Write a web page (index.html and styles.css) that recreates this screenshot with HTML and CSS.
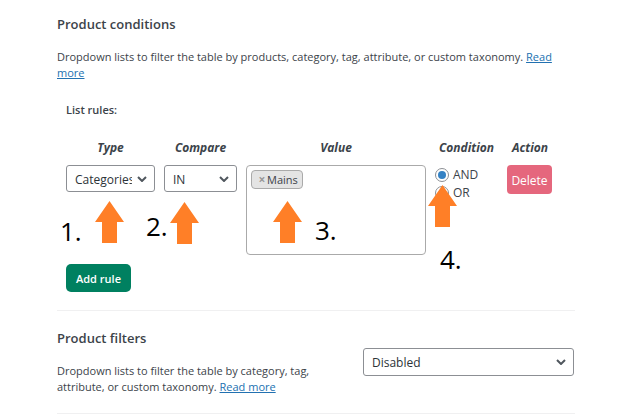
FILE: index.html
```html
<!DOCTYPE html>
<html lang="en">

<head>
    <meta charset="utf-8">
    <title>Product conditions</title>
    <link rel="stylesheet" href="styles.css">
</head>

<body>
    <div class="container">
        <section class="option">
            <h3>Product conditions</h3>
            <p>Dropdown lists to filter the table by products, category, tag, attribute, or custom taxonomy. <a href="#">Read more</a></p>

            <div class="rules">
                <h4>List rules:</h4>
                <table class="rules-table">
                    <colgroup>
                        <col class="col-type">
                        <col class="col-compare">
                        <col class="col-value">
                        <col class="col-condition">
                        <col class="col-action">
                    </colgroup>
                    <tr>
                        <th id="type">Type</th>
                        <th id="compare">Compare</th>
                        <th id="value">Value</th>
                        <th>Condition</th>
                        <th>Action</th>
                    </tr>
                    <tr>
                        <td>
                            <div class="select">
                                <select aria-labelledby="type">
                                    <option>Categories</option>
                                </select>
                                <svg viewBox="0 0 10 6"><path d="M1 1l4 4 4-4"/></svg>
                            </div>
                        </td>
                        <td>
                            <div class="select">
                                <select aria-labelledby="compare">
                                    <option>IN</option>
                                </select>
                                <svg viewBox="0 0 10 6"><path d="M1 1l4 4 4-4"/></svg>
                            </div>
                        </td>
                        <td>
                            <div class="tags" role="group" aria-labelledby="value">
                                <span class="tag"><button type="button" class="tag-remove" aria-label="Remove">×</button>Mains</span>
                            </div>
                        </td>
                        <td>
                            <label class="radio"><input type="radio" name="condition" checked>AND</label>
                            <label class="radio"><input type="radio" name="condition">OR</label>
                        </td>
                        <td><button type="button" class="btn btn-delete">Delete</button></td>
                    </tr>
                </table>
                <button type="button" class="btn btn-add">Add rule</button>

                <!-- Numbered arrows over the rule fields -->
                <svg class="arrow arrow-1" viewBox="0 0 29 42"><path d="M14.5 0L29 21H22V42H7V21H0z"/></svg>
                <svg class="arrow arrow-2" viewBox="0 0 29 42"><path d="M14.5 0L29 21H22V42H7V21H0z"/></svg>
                <svg class="arrow arrow-3" viewBox="0 0 29 42"><path d="M14.5 0L29 21H22V42H7V21H0z"/></svg>
                <svg class="arrow arrow-4" viewBox="0 0 29 42"><path d="M14.5 0L29 21H22V42H7V21H0z"/></svg>
                <span class="step step-1">1.</span>
                <span class="step step-2">2.</span>
                <span class="step step-3">3.</span>
                <span class="step step-4">4.</span>
            </div>
        </section>

        <section class="option option-row">
            <div class="option-text">
                <h3><label for="filters">Product filters</label></h3>
                <p>Dropdown lists to filter the table by category, tag, attribute, or custom taxonomy. <a href="#">Read more</a></p>
            </div>
            <div class="select select-wide">
                <select id="filters">
                    <option>Disabled</option>
                </select>
                <svg viewBox="0 0 10 6"><path d="M1 1l4 4 4-4"/></svg>
            </div>
        </section>
    </div>
</body>

</html>
```
FILE: styles.css
```css
* {
    box-sizing: border-box;
}

body {
    margin: 0;
    background-color: #ffffff;
    color: #3c434a;
    font-family: "Open Sans", "Noto Sans", sans-serif;
    font-size: 12px;
    line-height: 16px;
}

.container {
    margin: 0 53px 0 57px;
}

.option {
    padding: 14px 0 18px;
    border-bottom: 1px solid #f0f0f1;
}

h3 {
    margin: 0;
    font-size: 13px;
    font-weight: 600;
    line-height: 20px;
}

p {
    margin: 15px 0 0;
    font-size: 11px;
}

a {
    color: #2271b1;
}

h4 {
    margin: 0 0 22px;
    font-size: 11px;
    font-weight: 600;
}

.rules {
    position: relative;
    margin: 21px 9px 0;
}

/* Rules table */
.rules-table {
    width: 487px;
    table-layout: fixed;
    border-collapse: collapse;
    margin-bottom: 9px;
}

.col-type {
    width: 98px;
}

.col-compare {
    width: 82px;
}

.col-value {
    width: 189px;
}

.col-condition {
    width: 72px;
}

.rules-table th {
    padding: 0 9px 9px 0;
    font-weight: 700;
    font-style: italic;
    white-space: nowrap;
}

.rules-table td {
    padding: 0 9px 0 0;
    vertical-align: top;
}

.rules-table th:last-child,
.rules-table td:last-child {
    padding-right: 0;
}

/* Fields */
.select {
    position: relative;
}

.select select {
    display: block;
    appearance: none;
    width: 100%;
    height: 27px;
    padding: 1px 22px 0 8px;
    border: 1px solid #8c8f94;
    border-radius: 3px;
    background-color: #ffffff;
    color: #2c3338;
    font-family: inherit;
    font-size: 12px;
}

.select svg {
    position: absolute;
    top: 50%;
    right: 8px;
    width: 10px;
    height: 6px;
    margin-top: -3px;
    fill: none;
    stroke: #50575e;
    stroke-width: 2;
    pointer-events: none;
}

.tags {
    height: 90px;
    padding: 4px;
    border: 1px solid #aaaaaa;
    border-radius: 4px;
}

.tag {
    display: inline-flex;
    align-items: center;
    height: 19px;
    padding: 0 4px 0 5px;
    border: 1px solid #aaaaaa;
    border-radius: 4px;
    background-color: #e4e4e4;
    font-size: 11px;
}

.tag-remove {
    width: 10px;
    padding: 0;
    border: none;
    background: none;
    color: #999999;
    font-family: inherit;
    font-size: 12px;
    font-weight: 700;
    line-height: 16px;
}

.radio {
    display: flex;
    align-items: center;
    gap: 4px;
    height: 18px;
    margin-top: 1px;
}

.radio + .radio {
    margin-top: 0;
}

.radio input {
    flex: none;
    appearance: none;
    width: 14px;
    height: 14px;
    margin: 0;
    padding: 2px;
    border: 1px solid #8c8f94;
    border-radius: 50%;
    background-color: #ffffff;
    background-clip: content-box;
}

.radio input:checked {
    background-color: #3582c4;
}

.btn {
    display: block;
    border: none;
    color: #ffffff;
    font-family: inherit;
    font-size: 12px;
    cursor: pointer;
}

.btn-delete {
    width: 45px;
    height: 29px;
    padding: 1px 0 0;
    border-radius: 4px;
    background-color: #e5677d;
}

.btn-add {
    height: 28px;
    padding: 1px 10px 0;
    border-radius: 5px;
    background-color: #008060;
    font-size: 11px;
    font-weight: 600;
}

/* Arrows and numbers */
.arrow {
    position: absolute;
    width: 29px;
    height: 42px;
    fill: #ff7f27;
}

.arrow-1 {
    top: 99px;
    left: 29px;
}

.arrow-2 {
    top: 100px;
    left: 104px;
}

.arrow-3 {
    top: 99px;
    left: 207px;
}

.arrow-4 {
    top: 83px;
    left: 362px;
}

.step {
    position: absolute;
    color: #000000;
    font-size: 26px;
    line-height: 32px;
}

.step-1 {
    top: 113px;
    left: -6px;
}

.step-2 {
    top: 108px;
    left: 80px;
}

.step-3 {
    top: 112px;
    left: 249px;
}

.step-4 {
    top: 141px;
    left: 374px;
}

/* Product filters */
.option-row {
    display: flex;
    justify-content: space-between;
    align-items: center;
    padding: 17px 1px 18px 0;
}

.option-text {
    width: 270px;
}

.select-wide {
    width: 211px;
}

.select-wide select {
    height: 28px;
}
```
